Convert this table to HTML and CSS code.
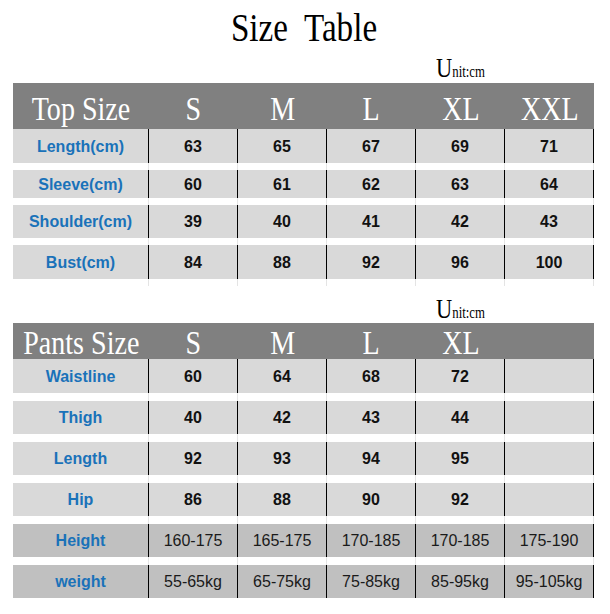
FILE: index.html
```html
<!DOCTYPE html>
<html>
<head>
<meta charset="utf-8">
<link rel="stylesheet" href="styles.css">
</head>
<body>
<div class="sheet">
  <h1 class="title"><span class="squash">Size&nbsp; Table</span></h1>

  <div class="unit-row unit-row-top">
    <span class="unit"><span class="unit-u">U</span>nit:cm</span>
  </div>

  <div class="table">
    <div class="head head-top">
      <div class="hcell"><span class="squash">Top Size</span></div>
      <div class="hcell"><span class="squash">S</span></div>
      <div class="hcell"><span class="squash">M</span></div>
      <div class="hcell"><span class="squash">L</span></div>
      <div class="hcell"><span class="squash">XL</span></div>
      <div class="hcell"><span class="squash">XXL</span></div>
    </div>
    <div class="rows rows-top">
      <div class="row"><div class="cell label">Length(cm)</div><div class="cell">63</div><div class="cell">65</div><div class="cell">67</div><div class="cell">69</div><div class="cell">71</div></div>
      <div class="row"><div class="cell label">Sleeve(cm)</div><div class="cell">60</div><div class="cell">61</div><div class="cell">62</div><div class="cell">63</div><div class="cell">64</div></div>
      <div class="row"><div class="cell label">Shoulder(cm)</div><div class="cell">39</div><div class="cell">40</div><div class="cell">41</div><div class="cell">42</div><div class="cell">43</div></div>
      <div class="row"><div class="cell label">Bust(cm)</div><div class="cell">84</div><div class="cell">88</div><div class="cell">92</div><div class="cell">96</div><div class="cell">100</div></div>
    </div>
  </div>

  <div class="unit-row unit-row-pants">
    <span class="unit"><span class="unit-u">U</span>nit:cm</span>
  </div>

  <div class="table">
    <div class="head head-pants">
      <div class="hcell"><span class="squash">Pants Size</span></div>
      <div class="hcell"><span class="squash">S</span></div>
      <div class="hcell"><span class="squash">M</span></div>
      <div class="hcell"><span class="squash">L</span></div>
      <div class="hcell"><span class="squash">XL</span></div>
      <div class="hcell"></div>
    </div>
    <div class="rows rows-pants">
      <div class="row"><div class="cell label">Waistline</div><div class="cell">60</div><div class="cell">64</div><div class="cell">68</div><div class="cell">72</div><div class="cell"></div></div>
      <div class="row"><div class="cell label">Thigh</div><div class="cell">40</div><div class="cell">42</div><div class="cell">43</div><div class="cell">44</div><div class="cell"></div></div>
      <div class="row"><div class="cell label">Length</div><div class="cell">92</div><div class="cell">93</div><div class="cell">94</div><div class="cell">95</div><div class="cell"></div></div>
      <div class="row"><div class="cell label">Hip</div><div class="cell">86</div><div class="cell">88</div><div class="cell">90</div><div class="cell">92</div><div class="cell"></div></div>
      <div class="row row-dark"><div class="cell label">Height</div><div class="cell">160-175</div><div class="cell">165-175</div><div class="cell">170-185</div><div class="cell">170-185</div><div class="cell">175-190</div></div>
      <div class="row row-dark"><div class="cell label">weight</div><div class="cell">55-65kg</div><div class="cell">65-75kg</div><div class="cell">75-85kg</div><div class="cell">85-95kg</div><div class="cell">95-105kg</div></div>
    </div>
  </div>
</div>
</body>
</html>
```

FILE: styles.css
```css
html, body {
  margin: 0;
  padding: 0;
  background: #ffffff;
}

.sheet {
  width: 581px;
  padding-left: 13px;
  font-family: "Liberation Sans", Arial, sans-serif;
}

.squash {
  display: inline-block;
  transform: scaleX(0.85);
  white-space: nowrap;
}

.title {
  margin: 0;
  height: 50px;
  box-sizing: border-box;
  padding-top: 6px;
  line-height: 44px;
  font-family: "Liberation Serif", "Times New Roman", serif;
  font-weight: normal;
  font-size: 39px;
  color: #000;
  text-align: center;
}

.unit-row {
  display: grid;
  grid-template-columns: 136px repeat(5, 89px);
  box-sizing: border-box;
  font-family: "Liberation Serif", "Times New Roman", serif;
  color: #000;
}

.unit-row-top {
  height: 33px;
  padding-top: 4px;
}

.unit-row-pants {
  height: 37px;
  padding-top: 9px;
}

.unit {
  grid-column: 5;
  justify-self: center;
  display: inline-block;
  transform: scaleX(0.8);
  line-height: 28px;
  font-size: 16px;
  white-space: nowrap;
}

.unit-u {
  font-size: 28px;
}

.head {
  display: grid;
  grid-template-columns: 136px repeat(5, 89px);
  background: #808080;
  box-sizing: border-box;
  font-family: "Liberation Serif", "Times New Roman", serif;
  font-size: 33px;
  color: #ffffff;
}

.head-top {
  height: 46px;
  padding-top: 6px;
  line-height: 40px;
}

.head-pants {
  height: 36px;
  padding-top: 5px;
  line-height: 31px;
}

.hcell {
  text-align: center;
}

.rows {
  display: grid;
  background:
    linear-gradient(#ffffff, #ffffff) 0 0 / 135px 100% no-repeat,
    linear-gradient(to right, transparent 88px, #e4e4e4 88px) 47px 0 / 89px 100% repeat-x;
}

.rows-top {
  row-gap: 7px;
  grid-template-rows: 34px 28px 33px 34px;
  padding-bottom: 7px;
}

.rows-pants {
  row-gap: 8px;
  grid-template-rows: 34px repeat(5, 33px);
}

.row {
  display: grid;
  grid-template-columns: 136px repeat(5, 89px);
  background: #d9d9d9;
}

.row-dark {
  background: #c0c0c0;
}

.cell {
  display: flex;
  align-items: center;
  justify-content: center;
  box-sizing: border-box;
  padding-top: 1px;
  border-right: 1px solid #000;
  font-weight: bold;
  font-size: 16px;
  color: #111;
  white-space: nowrap;
}

.label {
  font-size: 16px;
  color: #1a72b9;
}

.row-dark .cell {
  font-weight: normal;
  font-size: 16px;
  color: #1a1a1a;
}

.row-dark .label {
  font-weight: bold;
  font-size: 16px;
  color: #1a72b9;
}
```
